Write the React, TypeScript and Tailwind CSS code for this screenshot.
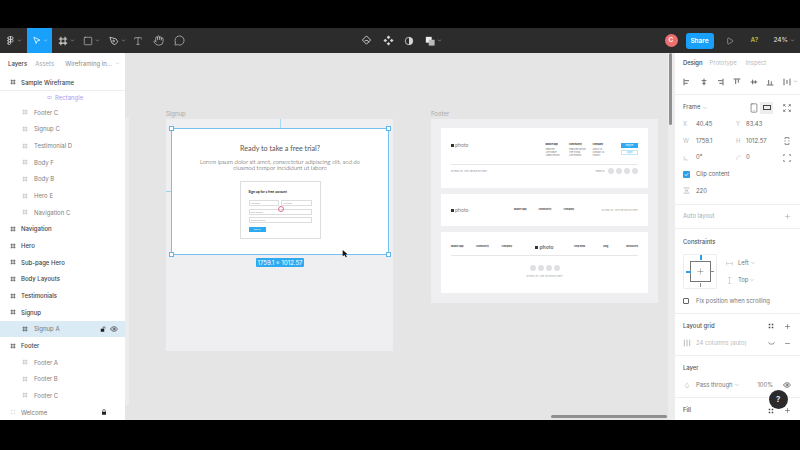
import React from 'react';
import {
  ChevronDown,
  Droplet,
  Eye,
  Figma,
  Hand,
  MessageCircle,
  Minus,
  Play,
  Plus,
  Smartphone,
  Square,
  Type,
} from 'lucide-react';

const FrameGlyph = ({ className }: { className: string }) => (
  <svg viewBox="0 0 12 12" className={className} fill="none" stroke="currentColor" strokeWidth="1.3">
    <path d="M3.5 1v10M8.5 1v10M1 3.5h10M1 8.5h10" />
  </svg>
);

const Dots = ({ className }: { className: string }) => (
  <svg viewBox="0 0 12 12" className={className} fill="currentColor">
    <rect x="1.5" y="1.5" width="3" height="3" />
    <rect x="7.5" y="1.5" width="3" height="3" />
    <rect x="1.5" y="7.5" width="3" height="3" />
    <rect x="7.5" y="7.5" width="3" height="3" />
  </svg>
);

const SolidLock = ({ className, open }: { className: string; open?: boolean }) => (
  <svg viewBox="0 0 12 12" className={className}>
    <path d={open ? 'M6 6V3.500a2 2 0 0 1 4 0V5' : 'M3.500 6V3.500a2.500 2.500 0 0 1 5 0V6'} fill="none" stroke="currentColor" strokeWidth="1.2" />
    <rect x={open ? 1.5 : 2} y="5.500" width={open ? 7 : 8} height="6" fill="currentColor" />
  </svg>
);

// alignment icons of the design panel, in toolbar order
const alignPaths = [
  'M1.500 1v10M2 4h7M2 8h5',
  'M6 1v10M2.500 4h7M3.500 8h5',
  'M10.500 1v10M3 4h7M5 8h5',
  'M1 1.500h10M4 2v7M8 2v5',
  'M1 6h10M4 2.500v7M8 3.500v5',
  'M1 10.500h10M4 3v7M8 5v5',
  'M1.500 1v10M10.500 1v10M6 3v6',
];

const SmallIcon = ({ d, className, width = 1 }: { d: string; className: string; width?: number }) => (
  <svg viewBox="0 0 12 12" className={className} fill="none" stroke="currentColor" strokeWidth={width}>
    <path d={d} />
  </svg>
);

type Layer = { name: string; level: 'top' | 'child' };

const layers: Layer[] = [
  { name: 'Footer C', level: 'child' },
  { name: 'Signup C', level: 'child' },
  { name: 'Testimonial D', level: 'child' },
  { name: 'Body F', level: 'child' },
  { name: 'Body B', level: 'child' },
  { name: 'Hero E', level: 'child' },
  { name: 'Navigation C', level: 'child' },
  { name: 'Navigation', level: 'top' },
  { name: 'Hero', level: 'top' },
  { name: 'Sub-page Hero', level: 'top' },
  { name: 'Body Layouts', level: 'top' },
  { name: 'Testimonials', level: 'top' },
  { name: 'Signup', level: 'top' },
];

const LayerRow = ({ name, level }: Layer) =>
  level === 'top' ? (
    <div className="h-[16.67px] shrink-0 flex items-center pl-[10px] gap-[5px] text-[#444] font-medium">
      <FrameGlyph className="w-[6px] h-[6px] text-[#444]" />
      <span>{name}</span>
    </div>
  ) : (
    <div className="h-[16.67px] shrink-0 flex items-center pl-[22px] gap-[6px] text-[#808080]">
      <FrameGlyph className="w-[6px] h-[6px] text-[#bbb]" />
      <span>{name}</span>
    </div>
  );

const Handle = ({ className }: { className: string }) => (
  <div className={`absolute w-[5px] h-[5px] bg-white border border-[#5cb8ee] ${className}`} />
);

const Field = ({ label, className }: { label: string; className: string }) => (
  <div className={`h-[6px] border border-[#ddd] text-[2px] leading-[4px] pl-[1px] text-[#999] ${className}`}>{label}</div>
);

const Social = () => <div className="rounded-full bg-[#e0dfe1] w-[6px] h-[6px]" />;

const FooterCol = ({ title, items }: { title: string; items: string[] }) => (
  <div className="w-[23.7px] text-[2.3px] leading-[3px] text-[#777]">
    <div className="font-bold text-[#333] mb-[2px]">{title}</div>
    {items.map(i => (
      <div key={i}>{i}</div>
    ))}
  </div>
);

const Logo = () => (
  <div className="flex items-center gap-[1px] text-[5px] leading-none text-[#777]">
    <div className="w-[3px] h-[3px] bg-[#333]" />
    <span>photo</span>
  </div>
);

const PropRow = ({ children }: { children: React.ReactNode }) => (
  <div className="flex items-center h-[16.67px] pl-[8px] pr-[9px] text-[#666]">{children}</div>
);

const Canvas = () => (
  <main className="flex-1 relative bg-[#e5e5e5] overflow-hidden">
    <div className="absolute left-0 top-[65px] bottom-[15px] w-[4px] bg-[#ececec]" />

    {/* Signup group */}
    <div className="absolute left-[41px] top-[58px] text-[6px] leading-none text-[#aaa]">Signup</div>
    <div className="absolute left-[41px] top-[66px] w-[227px] h-[232px] bg-[#efeef0]" />
    <div className="absolute left-[155px] top-[66px] h-[9px] w-[1px] bg-[#a8d8f2]" />
    <div className="absolute left-[41px] top-[138px] w-[5px] h-[1px] bg-[#9ed3f0]" />
    <div className="absolute left-[46px] top-[75px] w-[218px] h-[127px] bg-white border border-[#72c1f0] flex flex-col items-center pt-[15px] font-['Lato',sans-serif]">
      <div className="text-[7.2px] leading-[10px] text-[#555]">Ready to take a free trial?</div>
      <div className="mt-[4.500px] text-[6px] leading-[6.5px] font-light text-[#333] text-center w-[172px]">
        Lorem ipsum dolor sit amet, consectetur adipiscing elit, sed do eiusmod tempor incididunt ut labore
      </div>
      <div className="mt-[9px] w-[81px] h-[58px] border border-[#dddde0] px-[8px] pt-[8px] flex flex-col gap-[2.5px]">
        <div className="text-[3.4px] leading-[5px] font-bold text-[#222] mb-[3px]">Sign up for a free account</div>
        <div className="flex gap-[2px]">
          <Field label="First name" className="flex-1" />
          <Field label="Last name" className="flex-1" />
        </div>
        <Field label="Email address" className="w-full" />
        <Field label="Create password" className="w-full" />
        <div className="mt-[1px] w-[17px] h-[5.5px] bg-[#2eaaf0] text-white text-[2px] leading-[5.5px] text-center">Sign up</div>
      </div>
      <div className="absolute left-[105.5px] top-[77px] w-[6px] h-[6px] rounded-full border border-[#d9708f]" />
      <Handle className="-left-[3px] -top-[3px]" />
      <Handle className="-right-[3px] -top-[3px]" />
      <Handle className="-left-[3px] -bottom-[3px]" />
      <Handle className="-right-[3px] -bottom-[3px]" />
    </div>
    <div className="absolute left-[131px] top-[205px] h-[9px] w-[48px] rounded-[1px] bg-[#2eaaf0] text-white text-[6px] leading-[9px] text-center whitespace-nowrap font-['Inter',sans-serif]">
      1759.1 × 1012.57
    </div>
    <svg viewBox="0 0 10 12" className="absolute left-[217px] top-[196px] w-[7px] h-[9px]">
      <path d="M1 1l7 6H5l2 4-1.500.5L3.500 8 1 10z" fill="#111" />
    </svg>

    {/* Footer group */}
    <div className="absolute left-[306px] top-[58px] text-[6px] leading-none text-[#aaa]">Footer</div>
    <div className="absolute left-[306px] top-[66px] w-[227px] h-[184px] bg-[#efeef0] px-[10px] pt-[9px] flex flex-col gap-[6px]">
      <div className="h-[60px] bg-white px-[10px] pt-[15px] flex flex-col font-['Inter',sans-serif]">
        <div className="flex items-start h-[21px]">
          <div className="w-[95px]">
            <Logo />
          </div>
          <FooterCol title="Mobile app" items={['Features', 'Live share', 'Video record']} />
          <FooterCol title="Community" items={['Featured artists', 'The Portal', 'Live events']} />
          <FooterCol title="Company" items={['About us', 'Contact us', 'History']} />
          <div className="ml-[5px] flex flex-col gap-[2px]">
            <div className="w-[17px] h-[5px] bg-[#2eaaf0] text-white text-[2px] leading-[5px] text-center">Register</div>
            <div className="w-[17px] h-[5px] border border-[#bfe5fa] text-[#2eaaf0] text-[2px] leading-[3px] text-center">Log in</div>
          </div>
        </div>
        <div className="border-t border-[#e6e6e8]" />
        <div className="flex items-center justify-between mt-[3px] text-[2px] text-[#888]">
          <span>© Photo, Inc. 2019. We love our users!</span>
          <div className="flex items-center gap-[2px]">
            <span className="mr-[1px]">Follow us:</span>
            <Social />
            <Social />
            <Social />
            <Social />
          </div>
        </div>
      </div>

      <div className="h-[32px] bg-white px-[10px] flex items-center text-[2.3px] font-['Inter',sans-serif]">
        <div className="w-[63px]">
          <Logo />
        </div>
        <div className="flex gap-[12px] font-bold text-[#444]">
          <span>Mobile app</span>
          <span>Community</span>
          <span>Company</span>
        </div>
        <span className="ml-auto text-[2px] text-[#999]">© Photo, Inc. 2019. We love our users!</span>
      </div>

      <div className="h-[61px] bg-white px-[10px] pt-[12px] flex flex-col items-center font-['Inter',sans-serif]">
        <div className="w-full flex items-center text-[2.3px] font-bold text-[#444] h-[6px]">
          <div className="flex-1 flex gap-[12.5px]">
            <span>Mobile app</span>
            <span>Community</span>
            <span>Company</span>
          </div>
          <Logo />
          <div className="flex-1 flex justify-end gap-[18px]">
            <span>Help desk</span>
            <span>Blog</span>
            <span>Resources</span>
          </div>
        </div>
        <div className="w-full border-t border-[#e6e6e8] mt-[5px]" />
        <div className="flex gap-[2px] mt-[8.7px]">
          <Social />
          <Social />
          <Social />
          <Social />
        </div>
        <div className="mt-[4.5px] text-[2px] text-[#999]">© Photo, Inc. 2019. We love our users!</div>
      </div>
    </div>

    <div className="absolute right-0 top-0 bottom-0 w-[7px] bg-[#ededed]">
      <div className="ml-[1px] w-[3px] h-[72px] bg-[#8f8f8f] rounded-full" />
    </div>
    <div className="absolute left-[426px] right-[8px] bottom-[2px] h-[3px] rounded-full bg-[#8f8f8f]" />
  </main>
);

const RightPanel = () => (
  <aside className="w-[125px] shrink-0 bg-white flex flex-col text-[5.9px] font-['Inter',sans-serif] text-[#666] overflow-hidden">
    <div className="h-[21px] shrink-0 flex items-center px-[8px] text-[#bbb]">
      <span className="text-[#444] font-medium">Design</span>
      <span className="ml-[7px]">Prototype</span>
      <span className="ml-[9px]">Inspect</span>
    </div>
    <div className="h-[21px] shrink-0 flex items-center pb-[5px] pl-[8px] gap-[8.7px] text-[#555] border-b border-[#eee]">
      {alignPaths.map(d => (
        <SmallIcon key={d} d={d} width={1.3} className="w-[8px] h-[8px]" />
      ))}
      <ChevronDown className="-ml-[7px] w-[5px] h-[5px] text-[#777]" />
    </div>
    <div className="h-[110px] shrink-0 border-b border-[#eee]">
      <div className="h-[21px] pt-[4px] flex items-center pl-[8px] pr-[9px] text-[#555]">
        <span>Frame</span>
        <ChevronDown className="w-[6px] h-[6px] ml-[2px] text-[#aaa]" />
        <Smartphone className="ml-auto w-[10px] h-[10px] text-[#555]" strokeWidth={1.5} />
        <div className="w-[13px] h-[12px] ml-[1px] bg-[#ededed] flex items-center justify-center">
          <div className="w-[8px] h-[5px] border border-[#444]" />
        </div>
        <SmallIcon d="M1 1l3 3M11 1L8 4M1 11l3-3M11 11L8 8M1 3.500V1h2.500M11 3.500V1H8.500M1 8.500V11h2.500M11 8.500V11H8.500" className="ml-[10px] w-[8px] h-[8px] text-[#555]" />
      </div>
      <PropRow>
        <span className="w-[13px] text-[#bbb]">X</span>
        <span className="w-[40px]">40.45</span>
        <span className="w-[10px] text-[#bbb]">Y</span>
        <span>83.43</span>
      </PropRow>
      <PropRow>
        <span className="w-[13px] text-[#bbb]">W</span>
        <span className="w-[40px]">1759.1</span>
        <span className="w-[10px] text-[#bbb]">H</span>
        <span>1012.57</span>
        <SmallIcon d="M3 3V1h6v2M3 9v2h6V9M3 5v2M9 5v2" className="ml-auto w-[8px] h-[8px] text-[#555]" />
      </PropRow>
      <PropRow>
        <SmallIcon d="M2 2v8h8M2 6c2 0 4 2 4 4" className="w-[6px] h-[6px] mr-[7px] text-[#bbb]" />
        <span className="w-[40px]">0°</span>
        <SmallIcon d="M2 10V6c0-2 2-4 4-4h4" className="w-[6px] h-[6px] mr-[4px] text-[#bbb]" />
        <span>0</span>
        <SmallIcon d="M1 3V1h2M9 1h2v2M1 9v2h2M9 11h2V9" className="ml-auto w-[8px] h-[8px] text-[#555]" />
      </PropRow>
      <PropRow>
        <div className="w-[7px] h-[7px] bg-[#2b9fe8] rounded-[1px] mr-[6px] text-white text-[6px] leading-[7px] text-center">✓</div>
        <span>Clip content</span>
      </PropRow>
      <PropRow>
        <SmallIcon d="M1 1.500h10M1 10.500h10M3 4l3 2-3 2M9 4L6 6l3 2" className="w-[7px] h-[7px] mr-[6px] text-[#999]" />
        <span>220</span>
      </PropRow>
    </div>
    <div className="h-[24px] shrink-0 flex items-center justify-between pl-[8px] pr-[9px] text-[#aaa] border-b border-[#eee]">
      <span>Auto layout</span>
      <Plus className="w-[7px] h-[7px]" />
    </div>
    <div className="h-[85px] shrink-0 border-b border-[#eee] px-[8px]">
      <div className="h-[25px] pt-[2.500px] flex items-center text-[#555] font-medium">Constraints</div>
      <div className="flex">
        <div className="w-[34px] h-[35px] border border-[#eee] rounded-[1px] flex items-center justify-center relative">
          <div className="w-[21px] h-[21px] border border-[#777] flex items-center justify-center">
            <Plus className="w-[9px] h-[9px] text-[#666]" strokeWidth={1.2} />
          </div>
          <div className="absolute left-[16px] top-0 w-[2px] h-[5px] bg-[#2b9fe8]" />
          <div className="absolute left-[2px] top-[16px] w-[5px] h-[2px] bg-[#2b9fe8]" />
          <div className="absolute right-[2px] top-[16px] w-[4px] h-[1px] bg-[#888]" />
          <div className="absolute left-[16px] bottom-[1px] w-[1px] h-[4px] bg-[#888]" />
        </div>
        <div className="ml-[9px] flex flex-col gap-[9px] mt-[5px] text-[#777]">
          <div className="flex items-center h-[8px]">
            <SmallIcon d="M1 3v6M11 3v6M1 6h10" className="w-[7px] h-[7px] mr-[5px] text-[#bbb]" />
            <span>Left</span>
            <ChevronDown className="w-[6px] h-[6px] ml-[1px] text-[#aaa]" />
          </div>
          <div className="flex items-center h-[8px]">
            <SmallIcon d="M3 1h6M3 11h6M6 1v10" className="w-[7px] h-[7px] mr-[5px] text-[#bbb]" />
            <span>Top</span>
            <ChevronDown className="w-[6px] h-[6px] ml-[1px] text-[#aaa]" />
          </div>
        </div>
      </div>
      <div className="flex items-center mt-[7px] h-[10px]">
        <div className="w-[6px] h-[6px] border border-[#666] rounded-[1px] mr-[7px]" />
        <span className="text-[#777]">Fix position when scrolling</span>
      </div>
    </div>
    <div className="h-[41.500px] shrink-0 border-b border-[#eee] pl-[8px] pr-[9px]">
      <div className="h-[22px] pt-[2.600px] flex items-center text-[#555] font-medium">
        <span>Layout grid</span>
        <Dots className="ml-auto mr-[10px] w-[6px] h-[6px] text-[#444]" />
        <Plus className="w-[7px] h-[7px] text-[#555]" />
      </div>
      <div className="h-[14px] flex items-center text-[#bbb]">
        <SmallIcon d="M2 1v10M6 1v10M10 1v10" className="w-[8px] h-[8px] mr-[5px] text-[#999]" />
        <span>24 columns (auto)</span>
        <SmallIcon d="M1 4c1 3 3 3 5 3s4 0 5-3" className="ml-auto mr-[9px] w-[7px] h-[7px] text-[#444]" />
        <Minus className="w-[7px] h-[7px] text-[#555]" />
      </div>
    </div>
    <div className="h-[42.500px] shrink-0 border-b border-[#eee] pl-[8px] pr-[9px]">
      <div className="h-[22.500px] pt-[3px] flex items-center text-[#555] font-medium">Layer</div>
      <div className="h-[14px] flex items-center text-[#777]">
        <Droplet className="w-[6px] h-[6px] mr-[6px] ml-[1px] text-[#bbb]" />
        <span>Pass through</span>
        <ChevronDown className="w-[6px] h-[6px] ml-[1px] text-[#aaa]" />
        <span className="ml-auto mr-[10px]">100%</span>
        <Eye className="w-[8px] h-[8px] text-[#444]" />
      </div>
    </div>
    <div className="relative h-[22px] shrink-0 pt-[3px] flex items-center pl-[8px] pr-[9px] text-[#555] font-medium">
      <span>Fill</span>
      <Dots className="ml-auto mr-[10px] w-[6px] h-[6px] text-[#444]" />
      <Plus className="w-[7px] h-[7px] text-[#555]" />
      <div className="absolute left-[93.500px] -top-[8.500px] w-[19px] h-[19px] rounded-full bg-[#2b2b2d] text-white text-[8px] leading-[19px] text-center">?</div>
    </div>
  </aside>
);

export default function App() {
  return (
    <div className="w-[800px] h-[450px] overflow-hidden bg-black flex flex-col font-['Inter',sans-serif]">
      <div className="h-[28px] shrink-0" />

      {/* Toolbar */}
      <header className="h-[25px] shrink-0 bg-[#2c2c2c] flex items-center text-[#d5d5d5] relative">
        <div className="w-[27px] flex items-center justify-center gap-[2px]">
          <Figma className="w-[9px] h-[9px]" />
          <ChevronDown className="w-[5px] h-[5px]" />
        </div>
        <div className="w-[25px] h-[25px] bg-[#18a0fb] flex items-center justify-center gap-[2px] text-white">
          <svg viewBox="0 0 12 12" className="w-[9px] h-[9px]" fill="none" stroke="currentColor">
            <path d="M2.500 1.500l8 4-3.500 1-1.500 3.500z" />
          </svg>
          <ChevronDown className="w-[5px] h-[5px]" />
        </div>
        <div className="flex items-center gap-[2px] ml-[6px]">
          <FrameGlyph className="w-[10px] h-[10px]" />
          <ChevronDown className="w-[5px] h-[5px]" />
        </div>
        <div className="flex items-center gap-[2px] ml-[8px]">
          <Square className="w-[10px] h-[10px]" strokeWidth={1.4} />
          <ChevronDown className="w-[5px] h-[5px]" />
        </div>
        <div className="flex items-center gap-[2px] ml-[8.500px]">
          <svg viewBox="0 0 12 12" className="w-[10px] h-[10px]" fill="none" stroke="currentColor">
            <path d="M1 1.500l7.500 2 2 3.500-3.500 3.500-3.500-2z" />
            <circle cx="5.500" cy="6" r="1" />
          </svg>
          <ChevronDown className="w-[5px] h-[5px]" />
        </div>
        <Type className="ml-[7px] w-[10px] h-[10px]" strokeWidth={1.4} />
        <Hand className="ml-[10.500px] w-[11px] h-[11px]" strokeWidth={1.4} />
        <MessageCircle className="ml-[10px] w-[11px] h-[11px]" strokeWidth={1.4} />

        <div className="absolute left-[361px] flex items-center gap-[10.500px]">
          <svg viewBox="0 0 12 12" className="w-[11px] h-[11px]" fill="none" stroke="currentColor">
            <path d="M6 1l4.500 4.500L6 10 1.500 5.500zM4 6.500c1.500-1 4-1 4.500 1.500" />
          </svg>
          <svg viewBox="0 0 12 12" className="w-[11px] h-[11px]" fill="currentColor">
            <path d="M6 .5L8 2.500 6 4.500 4 2.500zM2.500 4L4.500 6 2.500 8 .5 6zM9.500 4l2 2-2 2-2-2zM6 7.500l2 2-2 2-2-2z" />
          </svg>
          <svg viewBox="0 0 12 12" className="w-[10px] h-[10px]">
            <circle cx="6" cy="6" r="4.500" fill="none" stroke="currentColor" />
            <path d="M6 1.500a4.500 4.500 0 0 1 0 9z" fill="currentColor" />
          </svg>
          <div className="flex items-center gap-[2px]">
            <svg viewBox="0 0 12 12" className="w-[10px] h-[10px]" fill="currentColor">
              <rect x="1" y="1" width="7" height="7" fill="#eee" />
              <rect x="4.500" y="4.500" width="7" height="7" fill="#bbb" />
            </svg>
            <ChevronDown className="w-[5px] h-[5px]" />
          </div>
        </div>

        <div className="ml-auto flex items-center">
          <div className="w-[13px] h-[13px] rounded-full bg-[#ee6f6f] text-white text-[6.5px] leading-[13px] text-center font-semibold">C</div>
          <div className="ml-[8px] w-[28px] h-[16px] rounded-[3px] bg-[#18a0fb] text-white text-[6.5px] leading-[16px] text-center font-semibold">Share</div>
          <Play className="ml-[12px] w-[8px] h-[8px]" strokeWidth={1.5} />
          <span className="ml-[17px] text-[6.5px] font-semibold text-[#b5b83c]">A?</span>
          <span className="ml-[15px] text-[6.5px] font-medium text-[#ddd]">24%</span>
          <ChevronDown className="ml-[2px] mr-[5px] w-[5px] h-[5px]" />
        </div>
      </header>

      <div className="h-[367px] shrink-0 flex">
        {/* Layers panel */}
        <aside className="w-[125px] shrink-0 bg-white flex flex-col text-[6px] overflow-hidden">
          <div className="h-[21px] shrink-0 flex items-center pl-[8px] pr-[5px] text-[#aaa]">
            <span className="text-[#444] font-medium">Layers</span>
            <span className="ml-[8px]">Assets</span>
            <span className="ml-auto text-[#888]">Wireframing in...</span>
            <ChevronDown className="w-[5px] h-[5px] ml-[3px]" />
          </div>
          <div className="h-[16px] shrink-0 flex items-center pl-[10px] gap-[5px] text-[#444] font-medium">
            <FrameGlyph className="w-[6px] h-[6px] text-[#444]" />
            <span>Sample Wireframe</span>
          </div>
          <div className="h-[14px] shrink-0 border-t border-[#eee] flex items-center pl-[47px] gap-[3px] text-[#a99cf0]">
            <span className="w-[5px] h-[3px] border border-[#c8c0f5] rounded-full" />
            <span>Rectangle</span>
          </div>
          {layers.map(l => (
            <LayerRow key={l.name} {...l} />
          ))}
          <div className="h-[16.67px] shrink-0 flex items-center pl-[22px] gap-[6px] bg-[#daebf5] text-[#777]">
            <FrameGlyph className="w-[6px] h-[6px] text-[#444]" />
            <span>Signup A</span>
            <SolidLock open className="ml-auto w-[6px] h-[6px] text-[#222]" />
            <Eye className="-ml-[2px] mr-[7px] w-[8px] h-[8px] text-[#333]" />
          </div>
          <LayerRow name="Footer" level="top" />
          <LayerRow name="Footer A" level="child" />
          <LayerRow name="Footer B" level="child" />
          <LayerRow name="Footer C" level="child" />
          <div className="h-[16.67px] shrink-0 flex items-center pl-[10px] gap-[5px] text-[#777]">
            <Dots className="w-[6px] h-[6px] text-[#ddd]" />
            <span>Welcome</span>
            <SolidLock className="ml-auto mr-[18px] w-[6px] h-[6px] text-[#222]" />
          </div>
        </aside>

        <Canvas />
        <RightPanel />
      </div>

      <div className="flex-1 bg-black" />
    </div>
  );
}
